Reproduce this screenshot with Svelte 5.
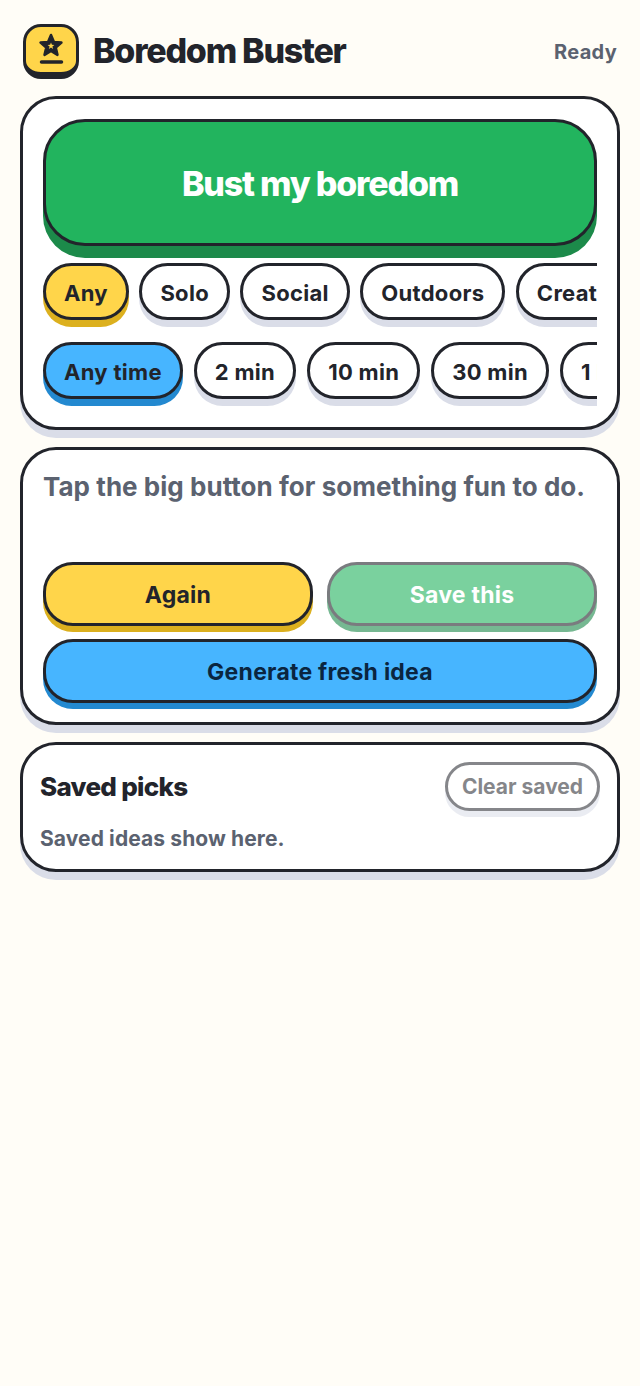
<script>
  const moods = ['Any', 'Solo', 'Social', 'Outdoors', 'Creative', 'Chill'];
  const times = ['Any time', '2 min', '10 min', '30 min', '1 hour'];
</script>

<div class="page">
  <header class="top">
    <div class="brand">
      <div class="logo">
        <svg width="30" height="33" viewBox="0 0 30 33" fill="none" aria-hidden="true">
          <path d="M15 3L17.94 9.95L25.46 10.6L19.76 15.55L21.47 22.9L15 19L8.53 22.9L10.24 15.55L4.54 10.6L12.06 9.95Z" fill="#22242b" stroke="#22242b" stroke-width="2.500" stroke-linejoin="round"/>
          <path d="M15 10.400L15.900 12.800L18.400 12.900L16.400 14.500L17.100 16.900L15 15.500L12.900 16.900L13.600 14.500L11.600 12.900L14.100 12.800Z" fill="#ffd54a"/>
          <path d="M5.500 30H25.500" stroke="#22242b" stroke-width="3.500" stroke-linecap="round"/>
        </svg>
      </div>
      <h1>Boredom Buster</h1>
    </div>
    <span class="status">Ready</span>
  </header>

  <section class="card controls">
    <button class="bust">Bust my boredom</button>
    <div class="chips moods">
      {#each moods as m, i}
        <button class="chip" class:yellow={i === 0}>{m}</button>
      {/each}
    </div>
    <div class="chips times">
      {#each times as t, i}
        <button class="chip" class:blue={i === 0}>{t}</button>
      {/each}
    </div>
  </section>

  <section class="card idea">
    <p class="prompt">Tap the big button for something fun to do.</p>
    <div class="pair">
      <button class="act again">Again</button>
      <button class="act save">Save this</button>
    </div>
    <button class="act fresh">Generate fresh idea</button>
  </section>

  <section class="card saved">
    <div class="saved-head">
      <h2>Saved picks</h2>
      <button class="clear">Clear saved</button>
    </div>
    <p class="empty">Saved ideas show here.</p>
  </section>
</div>

<style>
  :global(body) {
    margin: 0;
    background: #fffdf7;
    font-family: Inter, "Noto Sans", sans-serif;
    color: #22242b;
  }
  .page {
    box-sizing: border-box;
    min-height: 1386px;
    padding: 23px 20px 0;
    display: flex;
    flex-direction: column;
  }
  button {
    font-family: inherit;
    color: #22242b;
    padding: 0;
    margin: 0;
  }
  .top {
    display: flex;
    align-items: center;
    justify-content: space-between;
    padding: 0 3px;
    height: 56px;
    margin-bottom: 17px;
  }
  .brand {
    display: flex;
    align-items: center;
    gap: 14px;
  }
  .logo {
    box-sizing: border-box;
    width: 56px;
    height: 55px;
    border: 3px solid #22242b;
    border-bottom-width: 7px;
    border-radius: 18px;
    background: #ffd54a;
    display: flex;
    align-items: flex-start;
    justify-content: center;
    padding-top: 5px;
  }
  h1 {
    margin: 0;
    font-size: 34px;
    font-weight: 800;
    letter-spacing: -1.25px;
    line-height: 1.2;
  }
  .status {
    font-size: 20px;
    font-weight: 700;
    letter-spacing: 0.3px;
    color: #5b6270;
    padding-top: 2px;
  }
  .card {
    box-sizing: border-box;
    background: #fff;
    border: 3px solid #22242b;
    border-radius: 36px;
    box-shadow: 0 8px 0 #dadde8;
    margin-bottom: 17px;
  }
  .controls {
    height: 334px;
    padding: 20px;
    display: flex;
    flex-direction: column;
  }
  .bust {
    box-sizing: border-box;
    flex: none;
    height: 127px;
    border: 3px solid #22242b;
    border-radius: 42px;
    background: #22b45e;
    box-shadow: 0 12px 0 #1c8a4a;
    color: #fff;
    font-size: 34px;
    font-weight: 800;
    letter-spacing: -1.2px;
    padding-top: 2px;
    margin-bottom: 17px;
  }
  .chips {
    display: flex;
    overflow: hidden;
    height: 66px;
    flex: none;
    margin-bottom: 13px;
  }
  .moods {
    gap: 10.5px;
  }
  .times {
    gap: 11px;
  }
  .chip {
    box-sizing: border-box;
    flex: none;
    height: 57px;
    padding: 2px 18px 0;
    border: 3px solid #22242b;
    border-radius: 999px;
    background: #fff;
    box-shadow: 0 7px 0 #dadde8;
    font-size: 22px;
    font-weight: 700;
    letter-spacing: 0.3px;
  }
  .yellow {
    background: #ffd54a;
    box-shadow: 0 7px 0 #dcb01e;
  }
  .blue {
    background: #47b5ff;
    box-shadow: 0 7px 0 #2389d0;
  }
  .idea {
    height: 278px;
    padding: 20px;
  }
  .prompt {
    margin: 0;
    height: 92px;
    font-size: 26px;
    font-weight: 700;
    line-height: 34px;
    letter-spacing: 0.04px;
    color: #5b6270;
    white-space: nowrap;
  }
  .pair {
    display: grid;
    grid-template-columns: 1fr 1fr;
    gap: 14px;
    margin-bottom: 13px;
  }
  .act {
    box-sizing: border-box;
    height: 64px;
    border: 3px solid #22242b;
    border-radius: 30px;
    padding-top: 2px;
    font-size: 23px;
    font-weight: 700;
    letter-spacing: 0.25px;
    display: block;
    width: 100%;
  }
  .again {
    background: #ffd54a;
    box-shadow: 0 6px 0 #dcb01e;
  }
  .save {
    background: #22b45e;
    box-shadow: 0 6px 0 #1c8a4a;
    color: #fff;
    opacity: 0.6;
  }
  .fresh {
    background: #47b5ff;
    box-shadow: 0 6px 0 #2389d0;
    color: #0a2540;
  }
  .saved {
    height: 130px;
    padding: 17px 17px 0;
  }
  .saved-head {
    display: flex;
    align-items: center;
    justify-content: space-between;
    height: 49px;
    margin-bottom: 15px;
  }
  h2 {
    margin: 0;
    font-size: 26px;
    font-weight: 800;
    letter-spacing: -0.7px;
  }
  .clear {
    box-sizing: border-box;
    width: 155px;
    height: 49px;
    border: 3px solid #22242b;
    border-radius: 999px;
    background: #fff;
    box-shadow: 0 6px 0 #dadde8;
    font-size: 21px;
    font-weight: 700;
    opacity: 0.55;
  }
  .empty {
    margin: 0;
    font-size: 21px;
    font-weight: 700;
    letter-spacing: 0.1px;
    line-height: 26px;
    color: #5b6270;
  }
</style>
